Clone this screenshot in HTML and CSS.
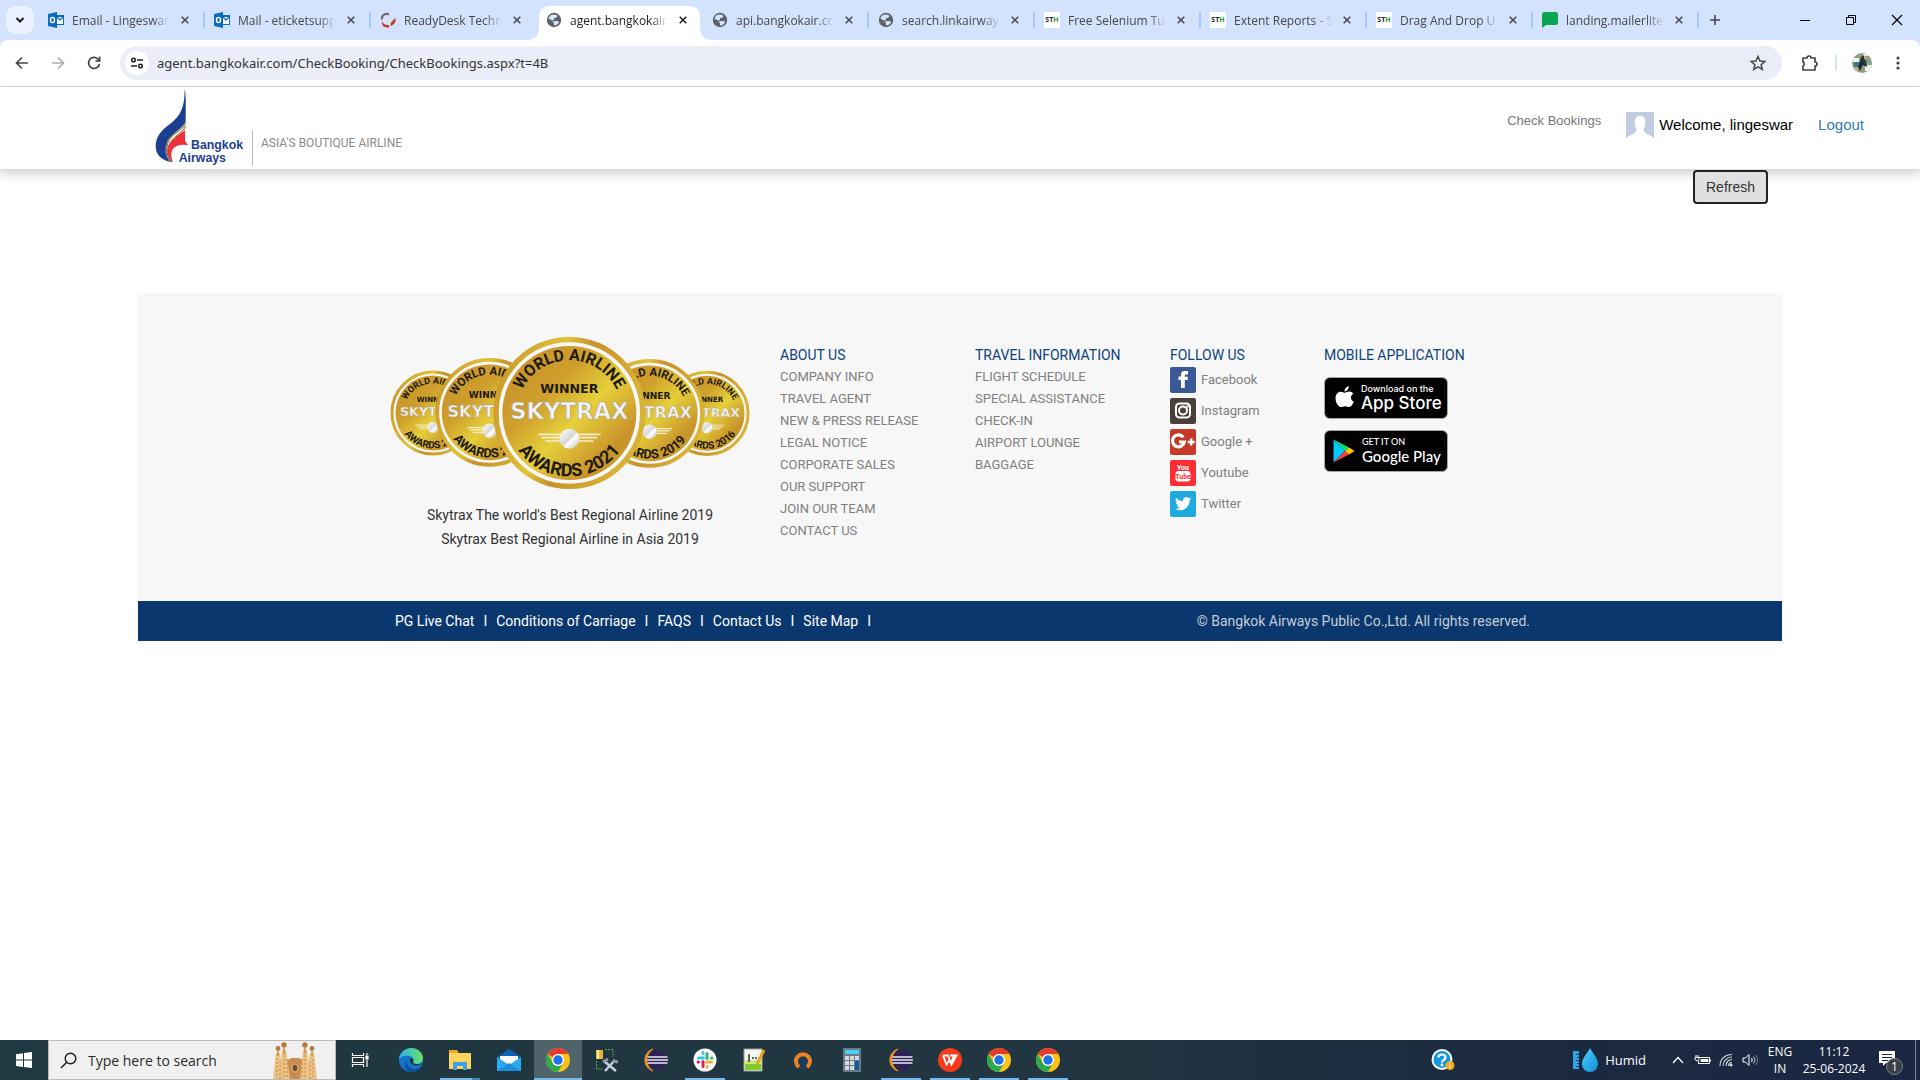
FILE: index.html
```
<!DOCTYPE html>
<html lang="en">
<head>
<meta charset="utf-8">
<title>Check Bookings - Bangkok Airways</title>
<link rel="stylesheet" href="styles.css">
</head>
<body>
<svg class="defs" width="0" height="0" aria-hidden="true">
  <defs>
    <linearGradient id="gold" x1="0" y1="0" x2="1" y2="1"><stop offset="0.1" stop-color="#c8922a"/><stop offset="0.35" stop-color="#cfa02c"/><stop offset="0.55" stop-color="#e6cf3a"/><stop offset="0.8" stop-color="#c8922a"/><stop offset="1" stop-color="#d9b032"/></linearGradient>
    <linearGradient id="rim" x1="0" y1="0" x2="1" y2="0.3"><stop offset="0" stop-color="#c8922a"/><stop offset="0.45" stop-color="#e0c337"/><stop offset="0.6" stop-color="#c8922a"/><stop offset="1" stop-color="#d8b234"/></linearGradient>
    <linearGradient id="silver" x1="0" y1="0" x2="1" y2="1"><stop offset="0" stop-color="#fff"/><stop offset="0.5" stop-color="#d8d8d8"/><stop offset="0.6" stop-color="#fff"/><stop offset="1" stop-color="#bbb"/></linearGradient>
    <linearGradient id="edge-sea" x1="0" y1="0" x2="1" y2="0"><stop offset="0" stop-color="#2ab4ea"/><stop offset="1" stop-color="#6be067"/></linearGradient>
    <linearGradient id="drop" x1="0" y1="0" x2="1" y2="1"><stop offset="0" stop-color="#4fd0f7"/><stop offset="1" stop-color="#0d8fe0"/></linearGradient>
    <path id="arc-top" d="M-158 0A158 158 0 0 1 158 0"/>
    <path id="arc-bottom" d="M-190 0A190 190 0 0 0 190 0"/>
  </defs>
  <symbol id="outlook" viewBox="0 0 16 16"><path fill="#0a6cc4" d="M0 2 9 0v16L0 14z"/><path fill="#0a6cc4" d="M9 3h7v10H9z"/><path fill="#fff" d="M9 5h6v7H9z"/><path d="m9 5 3 3 3-3" fill="none" stroke="#0a6cc4" stroke-width="1.3"/><ellipse cx="4.5" cy="8" rx="2" ry="2.6" fill="none" stroke="#fff" stroke-width="1.4"/></symbol>
  <symbol id="swirl" viewBox="0 0 16 16"><path d="M1 8C0 3 4 0 9 1v2.500C5 2 3 4 3 7z" fill="#776a64"/><path d="M2 9c1 3 3 4 7 4v2.500C4 16 1 13 2 9zM15.500 6c.5 4-1 6.500-5 8 0-1 0-3 1-4z" fill="#c43a22"/></symbol>
  <symbol id="globe" viewBox="0 0 16 16"><circle cx="8" cy="8" r="7.200" fill="#5f6368"/><path d="M8 2.500c2 0 3 .8 3.500 1.500L10 6H8v2l-2 .5-3.600-2A5.600 5.600 0 0 1 8 2.500zM9 9h2.500l1.600 1A5.500 5.500 0 0 1 8 13.500V11L6 10z" fill="#d3e3fd"/></symbol>
  <symbol id="bubble" viewBox="0 0 16 16"><path fill="#09a552" d="M2.500 0h11A2.500 2.500 0 0 1 16 2.500v8a2.500 2.500 0 0 1-2.500 2.500H4l-4 3V2.500A2.500 2.500 0 0 1 2.500 0z"/></symbol>
  <symbol id="x" viewBox="0 0 8 8"><path d="m.7.7 6.600 6.600m0-6.600L.7 7.300" stroke="currentColor" stroke-width="1.500" fill="none"/></symbol>
  <symbol id="chrome" viewBox="0 0 24 24"><circle cx="12" cy="12" r="12" fill="#fbc116"/><path fill="#e33b2e" d="M1.600 6A12 12 0 0 1 22.400 6H12a6 6 0 0 0-5.200 3z"/><path fill="#2da94f" d="M1.600 6A12 12 0 0 0 12 24l5.200-9a6 6 0 0 1-10.400 0z"/><circle cx="12" cy="12" r="6" fill="#fff"/><circle cx="12" cy="12" r="4.700" fill="#1f73e8"/></symbol>
  <symbol id="eclipse" viewBox="0 0 24 24"><path fill="#f7941e" d="M9 1a11.500 11.500 0 0 0 0 22A13 13 0 0 1 9 1z" stroke="#f7941e"/><circle cx="13.500" cy="12" r="10.300" fill="#2c2255"/><path d="M3.500 9h20M3 12h21M3.500 15h20" stroke="#e8e6f2" stroke-width="1.700"/></symbol>
  <symbol id="medal" viewBox="-228 -228 456 456" overflow="visible">
    <circle r="220" fill="#f7f7f7" stroke="url(#rim)" stroke-width="16"/><circle r="201" fill="url(#gold)"/>
    <text class="medal-arc"><textPath href="#arc-top" startOffset="50%">WORLD AIRLINE</textPath></text>
    <text class="medal-winner" y="-60">WINNER</text>
    <text class="medal-name" y="18">SKYTRAX</text>
    <path d="M-94 64H94M-84 74H84M-72 84H72" stroke="#f5ecd0" stroke-width="5"/><circle cy="77" r="30" fill="url(#silver)"/>
  </symbol>
</svg>

<header class="browser">
  <div class="tabstrip">
    <button class="tab-search" aria-label="Search tabs"><svg width="10" height="8" viewBox="0 0 10 8"><path d="m1.500 2 3.500 3.500L8.500 2" fill="none" stroke="#1f1f1f" stroke-width="2"/></svg></button>
    <div class="tab"><svg class="fav"><use href="#outlook"/></svg><span>Email - Lingeswar(Gm</span><button aria-label="Close"><svg><use href="#x"/></svg></button></div>
    <div class="tab"><svg class="fav"><use href="#outlook"/></svg><span>Mail - eticketsupport</span><button aria-label="Close"><svg><use href="#x"/></svg></button></div>
    <div class="tab before"><svg class="fav"><use href="#swirl"/></svg><span>ReadyDesk Technical</span><button aria-label="Close"><svg><use href="#x"/></svg></button></div>
    <div class="tab active"><svg class="fav"><use href="#globe"/></svg><span>agent.bangkokair.com</span><button aria-label="Close"><svg><use href="#x"/></svg></button></div>
    <div class="tab"><svg class="fav"><use href="#globe"/></svg><span>api.bangkokair.com</span><button aria-label="Close"><svg><use href="#x"/></svg></button></div>
    <div class="tab"><svg class="fav"><use href="#globe"/></svg><span>search.linkairways.com</span><button aria-label="Close"><svg><use href="#x"/></svg></button></div>
    <div class="tab"><b class="fav sth">ST<i>H</i></b><span>Free Selenium Tutorial</span><button aria-label="Close"><svg><use href="#x"/></svg></button></div>
    <div class="tab"><b class="fav sth">ST<i>H</i></b><span>Extent Reports - Sel</span><button aria-label="Close"><svg><use href="#x"/></svg></button></div>
    <div class="tab"><b class="fav sth">ST<i>H</i></b><span>Drag And Drop Using</span><button aria-label="Close"><svg><use href="#x"/></svg></button></div>
    <div class="tab"><svg class="fav"><use href="#bubble"/></svg><span>landing.mailerlite.com</span><button aria-label="Close"><svg><use href="#x"/></svg></button></div>
    <button class="new-tab" aria-label="New tab"><svg width="12" height="12"><path d="M6 1v10M1 6h10" stroke="#474747" stroke-width="1.600"/></svg></button>
    <div class="window-buttons">
      <button aria-label="Minimize"><svg width="12" height="12"><path d="M1 6.500h10" stroke="#000"/></svg></button>
      <button aria-label="Restore"><svg width="12" height="12" fill="none" stroke="#000"><path d="M1.500 3.500h7v7h-7zM3.500 3V1.500h7v7H9"/></svg></button>
      <button aria-label="Close window"><svg width="12" height="12"><path d="m1 1 10 10M11 1 1 11" stroke="#000" stroke-width="1.200"/></svg></button>
    </div>
  </div>
  <div class="toolbar">
    <button aria-label="Back"><svg width="16" height="16" fill="none" stroke="#474747" stroke-width="1.700"><path d="M14 8H3m5-5.500L2.500 8 8 13.500"/></svg></button>
    <button aria-label="Forward"><svg width="16" height="16" fill="none" stroke="#b0b0b2" stroke-width="1.700"><path d="M2 8h11M8 2.500 13.500 8 8 13.500"/></svg></button>
    <button aria-label="Reload"><svg width="16" height="16" fill="none" stroke="#474747" stroke-width="1.700"><path d="M13.500 9A5.500 5.500 0 1 1 12 4l1.500 1.500M13.700 1.500v4.300H9.500"/></svg></button>
    <div class="omnibox">
      <button class="site-info" aria-label="Site information"><svg width="14" height="12" fill="none" stroke="#1f1f1f" stroke-width="1.500"><circle cx="3.500" cy="3" r="1.800"/><path d="M7 3h6M1 9h6"/><circle cx="10.500" cy="9" r="1.800"/></svg></button>
      <input class="url" type="text" aria-label="Address" value="agent.bangkokair.com/CheckBooking/CheckBookings.aspx?t=4B">
      <button class="star" aria-label="Bookmark"><svg width="16" height="16" fill="none" stroke="#474747" stroke-width="1.500"><path d="m8 1.500 2 4.600 4.800.4-3.700 3.200 1.200 4.800L8 11.900l-4.300 2.600 1.200-4.800L1.200 6.500 6 6.100z"/></svg></button>
    </div>
    <button class="ext" aria-label="Extensions"><svg width="18" height="18" fill="none" stroke="#474747" stroke-width="1.700"><path d="M2 4h4a2 2 0 0 1 4 0h4v4a2 2 0 0 1 0 4v4H2v-4a2.200 2.200 0 0 0 0-4z"/></svg></button>
    <span class="bar"></span>
    <button class="profile" aria-label="Profile"><svg width="20" height="20" viewBox="0 0 20 20"><clipPath id="round"><circle cx="10" cy="10" r="10"/></clipPath><g clip-path="url(#round)"><path fill="#8fa184" d="M0 0h20v20H0z"/><path fill="#f1f3e8" d="M1 5h6v4H1zM13 12h6v6h-6zM11 1h5v2h-5z"/><path fill="#2b7d9b" d="M2 9h6v5H2zM12 7h3v6h-3z"/><path fill="#27302c" d="m9 4 3-2 1 6 2 6-4-2-3 6-2-4 2-6z"/><path fill="#d2a878" d="M1 14h5v6H1zM12 3h2v3h-2z"/></g></svg></button>
    <button class="menu" aria-label="Menu"><svg width="4" height="16" fill="#474747"><circle cx="2" cy="3" r="1.600"/><circle cx="2" cy="8" r="1.600"/><circle cx="2" cy="13" r="1.600"/></svg></button>
  </div>
</header>

<div class="page">
  <header class="site-header">
    <a class="logo" href="#" aria-label="Bangkok Airways">
      <svg width="88" height="80" viewBox="76 27 264 240">
        <path fill="#1c3f94" d="M165 28c4 8 4 60 3 98-8 16-35 30-48 53-11 22-10 44 8 68-30-5-51-22-50-50 1-29 18-47 43-65 33-25 44-51 44-104z"/>
        <path fill="none" stroke="#a1915b" stroke-width="4" d="M168 130c-10 24-40 27-54 55-9 22-7 41 8 60M168 139c-10 22-34 28-45 48-11 20-10 40 4 57"/>
        <path fill="#ee2f3c" d="M168 146c-4 19-38 25-50 46-9 18-6 38 12 54-8-20-7-34 5-44 12-10 25-5 30-16 4-11-2-22 3-40z"/>
        <path fill="#ee2f3c" d="M166 150c-6 18-3 30 9 46-14 0-31-6-42 2-6-30 20-34 33-48z"/>
        <g class="logo-text"><text x="184" y="207">Bangkok</text><text x="147" y="247">Airways</text></g>
      </svg>
      <span class="tagline">ASIA'S BOUTIQUE AIRLINE</span>
    </a>
    <nav class="account">
      <a class="check" href="#">Check Bookings</a>
      <span class="user"><svg width="28" height="28" viewBox="0 0 28 28"><path fill="#c3cde2" d="M0 0h28v28H0z"/><path fill="#fff" d="M14 4c-4 0-6 3-5 8-.5 2 .5 3 1 4v3c-1 3-6 4-10 7v2h28v-2c-4-3-9-4-10-7v-3c.5-1 1.500-2 1-4 1-6-1-8-5-8z"/></svg>Welcome, lingeswar</span>
      <a class="logout" href="#">Logout</a>
    </nav>
  </header>
  <main class="actions"><button class="refresh">Refresh</button></main>
  <footer class="site-footer">
    <div class="footer-main">
      <div class="container columns">
        <section class="awards">
          <svg width="360" height="152" viewBox="32 51 1080 456" role="img" aria-label="Skytrax World Airline Awards">
            <g transform="translate(161 279) scale(.56)"><use href="#medal" x="-228" y="-228" width="456" height="456"/><text class="medal-arc low"><textPath href="#arc-bottom" startOffset="50%">AWARDS 2017</textPath></text></g>
            <g transform="translate(331 277) scale(.715)"><use href="#medal" x="-228" y="-228" width="456" height="456"/><text class="medal-arc low"><textPath href="#arc-bottom" startOffset="50%">AWARDS 2018</textPath></text></g>
            <g transform="translate(983 280) scale(.56)"><use href="#medal" x="-228" y="-228" width="456" height="456"/><text class="medal-arc low"><textPath href="#arc-bottom" startOffset="50%">AWARDS 2016</textPath></text></g>
            <g transform="translate(811 280) scale(.715)"><use href="#medal" x="-228" y="-228" width="456" height="456"/><text class="medal-arc low"><textPath href="#arc-bottom" startOffset="50%">AWARDS 2019</textPath></text></g>
            <g transform="translate(570 279)"><use href="#medal" x="-228" y="-228" width="456" height="456"/><text class="medal-arc low"><textPath href="#arc-bottom" startOffset="50%">AWARDS 2021</textPath></text></g>
          </svg>
          <p>Skytrax The world's Best Regional Airline 2019<br>Skytrax Best Regional Airline in Asia 2019</p>
        </section>
        <section><h2>ABOUT US</h2>
          <ul><li><a href="#">COMPANY INFO</a></li><li><a href="#">TRAVEL AGENT</a></li><li><a href="#">NEW &amp; PRESS RELEASE</a></li><li><a href="#">LEGAL NOTICE</a></li><li><a href="#">CORPORATE SALES</a></li><li><a href="#">OUR SUPPORT</a></li><li><a href="#">JOIN OUR TEAM</a></li><li><a href="#">CONTACT US</a></li></ul>
        </section>
        <section><h2>TRAVEL INFORMATION</h2>
          <ul><li><a href="#">FLIGHT SCHEDULE</a></li><li><a href="#">SPECIAL ASSISTANCE</a></li><li><a href="#">CHECK-IN</a></li><li><a href="#">AIRPORT LOUNGE</a></li><li><a href="#">BAGGAGE</a></li></ul>
        </section>
        <section><h2>FOLLOW US</h2>
          <ul class="social">
            <li><a href="#"><svg viewBox="0 0 26 26"><rect width="26" height="26" rx="2" fill="#3b5998"/><path fill="#fff" d="M11 21v-8H8.500v-3.500H11V7.500C11 4.800 12.500 4 14.500 4H18v3.500h-2c-1 0-1.200.4-1.200 1.200v1H18l-.5 3.300h-2.700v8z"/></svg>Facebook</a></li>
            <li><a href="#"><svg viewBox="0 0 26 26"><rect width="26" height="26" rx="2" fill="#4a4039"/><g fill="none" stroke="#fff" stroke-width="2"><rect x="6" y="5.500" width="14" height="14" rx="3.500"/><circle cx="13" cy="12.500" r="4"/></g><circle cx="17.500" cy="8.500" r="1.200" fill="#fff"/></svg>Instagram</a></li>
            <li><a href="#"><svg viewBox="0 0 26 26"><rect width="26" height="26" rx="2" fill="#c53929"/><path fill="none" stroke="#fff" stroke-width="3.200" d="M13.300 8.200A6 6 0 1 0 14.400 13H9"/><path stroke="#fff" stroke-width="2.400" d="M21.200 9.500v7M17.700 13h7"/></svg>Google +</a></li>
            <li><a href="#"><svg viewBox="0 0 26 26"><rect width="26" height="26" rx="2" fill="#fb2e34"/><rect x="5.500" y="11" width="15" height="10.500" rx="3" fill="#fff"/><g class="yt"><text x="13" y="10" fill="#fff">You</text><text x="13" y="19" fill="#fb2e34">Tube</text></g></svg>Youtube</a></li>
            <li><a href="#"><svg viewBox="0 0 26 26"><rect width="26" height="26" rx="2" fill="#1fa9e1"/><path fill="#fff" transform="translate(5 4.500) scale(.68)" d="M24 4.600a10 10 0 0 1-2.800.8A5 5 0 0 0 23.300 2.700a10 10 0 0 1-3.100 1.200 4.900 4.900 0 0 0-8.400 4.500A14 14 0 0 1 1.700 3.200a4.900 4.900 0 0 0 1.500 6.600 5 5 0 0 1-2.200-.6 4.900 4.900 0 0 0 3.900 4.900 5 5 0 0 1-2.200.1 4.900 4.900 0 0 0 4.600 3.400A10 10 0 0 1 0 19.500 14 14 0 0 0 21.500 7.100 10 10 0 0 0 24 4.600z"/></svg>Twitter</a></li>
          </ul>
        </section>
        <section><h2>MOBILE APPLICATION</h2>
          <a class="store apple" href="#"><svg width="19" height="24" viewBox="0 0 19 24" fill="#fff"><path d="M9.700 6.700C11 6.700 12.300 5.500 14.300 5.600c1.700.1 3 .8 3.900 2.100-3.400 2.100-2.800 6.500.6 7.900-.8 2.400-2.600 5.500-4.700 5.500-1.600 0-2-.9-4-.9s-2.500.9-4 .9C3.400 21.100.5 16.400.5 12.200c0-4.100 2.600-6.500 5.100-6.500 1.700 0 3 1 4.100 1z"/><path d="M9.500 5.400C9.400 2.900 11.400.7 13.700.3c.3 2.600-1.800 5-4.200 5.100z"/></svg><span><small>Download on the</small>App Store</span></a>
          <a class="store play" href="#"><svg width="22" height="24" viewBox="0 0 22 24"><path fill="#00c8ff" d="M.5.500 12 12 .5 23.500z"/><path fill="#00e676" d="M.5.500 16 8.500 12 12z"/><path fill="#ff3a44" d="M.5 23.500 16 15.500 12 12z"/><path fill="#ffc900" d="m16 8.500 5.500 3.500L16 15.500 12 12z"/></svg><span><small>GET IT ON</small>Google Play</span></a>
        </section>
      </div>
    </div>
    <div class="footer-bar">
      <div class="container bar-row">
        <nav><a href="#">PG Live Chat</a><i>I</i><a href="#">Conditions of Carriage</a><i>I</i><a href="#">FAQS</a><i>I</i><a href="#">Contact Us</a><i>I</i><a href="#">Site Map</a><i>I</i></nav>
        <p>© Bangkok Airways Public Co.,Ltd. All rights reserved.</p>
      </div>
    </div>
  </footer>
</div>

<div class="taskbar">
  <button class="start" aria-label="Start"><svg width="16" height="16" fill="#fff"><path d="M0 2.200 7 1.200V7.600H0zM8 1 16 0v7.600H8zM0 8.500h7v6.400l-7-1zM8 8.500h8V16l-8-1z"/></svg></button>
  <label class="search">
    <svg width="17" height="17" fill="none" stroke="#1a1a1a" stroke-width="1.400"><circle cx="10.500" cy="6.500" r="5.300"/><path d="M6.500 10.500 1 16"/></svg>
    <input type="text" aria-label="Search" placeholder="Type here to search">
    <svg width="46" height="38" viewBox="0 0 46 38"><path fill="#c98d50" d="M14 38V20l5-3h8l5 3v18z"/><path fill="#edc285" d="M1 38 4 12h4l4 26zM8 38l2-29h4l4 29zM28 38l3-29h4l3 29zM34 38l4-26h4l3 26z"/><g fill="#b77a3a"><circle cx="6" cy="7.500" r="2.400"/><circle cx="12" cy="4" r="2.700"/><circle cx="33" cy="4" r="2.700"/><circle cx="40" cy="7.500" r="2.400"/></g><path d="M6 9v6m6-10v8m21-8v8m7-4v6" stroke="#c58c4c" stroke-width="1.500"/><path d="M5 17v21M8 20v18m4-24v24m3-20v20m15-20v20m3-24v24m5-18v18m3-20v20" stroke="#c08446" stroke-dasharray="2 2"/><ellipse cx="23" cy="27" rx="3" ry="4" fill="#6b4b36" stroke="#e8b878"/></svg>
  </label>
  <nav class="apps">
    <button class="task-view" aria-label="Task view"><svg width="18" height="16" fill="none" stroke="#fff" stroke-width="1.200"><path d="M1.500 1v2.500h11V1M1.500 15v-2.500h11V15M1.500 5.500h11v5h-11zM16 1v2m0 5v7"/><path d="M15 4h2v3h-2z" fill="#fff"/></svg></button>
    <button aria-label="Edge"><svg width="24" height="24" viewBox="0 0 24 24"><circle cx="12" cy="12" r="12" fill="#1473c8"/><path fill="url(#edge-sea)" d="M0 12C0 5 6 0 12 0c7 0 12 5 12 10 0 4-3 6-6 6s-4-1-4-2c1-1 1-5-3-6C6 7 1 8 0 12z"/><path fill="#0f4f9e" d="M8 12c-1 5 3 9 8 9 3 0 5-1 6-2-2 3-6 5-10 5C7 23 4 17 8 12z"/><path fill="#203740" d="M11 11c-1 3 2 6.500 6 6.500 3 0 5-1 7-3-3 2-9 2-10 0 1-2 0-5-3-3.500z"/></svg></button>
    <button class="open split" aria-label="File Explorer"><svg width="24" height="22" viewBox="0 0 24 22"><path fill="#e9a820" d="M1 1h8l2 3H1z"/><path fill="#ffd45e" d="M1 4h22v16H1z"/><path fill="#3fa0e4" d="M5 13h14v8h-4v-4H9v4H5z"/></svg></button>
    <button aria-label="Mail"><svg width="24" height="24" viewBox="0 0 24 24"><path fill="#0b63b8" d="M0 9 12 1l12 8v3H0z"/><path fill="#fff" d="M3 8h18v9H3z"/><path fill="#29a9ee" d="m0 9 12 8 12-8v14H0z"/><path fill="#178fdd" d="m0 23 12-8 12 8z"/></svg></button>
    <button class="current" aria-label="Chrome"><svg width="24" height="24"><use href="#chrome"/></svg></button>
    <button aria-label="Database tools"><svg width="24" height="24" viewBox="0 0 24 24"><path fill="#e5b540" d="M1 2h7v9H1z"/><path fill="#ffe79d" d="M2 2h2v9H2z"/><path fill="none" stroke="#55a845" stroke-dasharray="2 1" d="M10 1.500h8v8M1.500 13v8H8"/><path stroke="#c6d3e0" stroke-width="2.500" d="m9 13 12 10M20 12 10 23"/><path stroke="#8c9bac" stroke-width="3" d="m8 14 5-3m5 2 5 1"/></svg></button>
    <button aria-label="Eclipse"><svg width="24" height="24"><use href="#eclipse"/></svg></button>
    <button class="open" aria-label="Slack"><svg width="24" height="24" viewBox="0 0 24 24"><circle cx="12" cy="12" r="11.500" fill="#fff"/><g stroke-width="3" stroke-linecap="round"><path d="M5.500 10h5M10 4.500v1" stroke="#36c5f0"/><path d="M14 5.500v5M18.500 10h.5" stroke="#2eb67d"/><path d="M13.500 14h5M14 18.500v.5" stroke="#ecb22e"/><path d="M10 13.500v5M5 14h.5" stroke="#e01e5a"/></g></svg></button>
    <button aria-label="Notepad++"><svg width="24" height="24" viewBox="0 0 24 24"><path fill="#f4f7f0" stroke="#9aa393" d="M2 1h18v22H2z"/><path fill="#83cc2c" d="M3 14h16v8H3z"/><path fill="#cbe87f" d="M3 12h16v4H3z"/><path stroke="#333" stroke-width="1.500" d="M7 6v8m3-4h2m1 0h2"/><path stroke="#e9a21d" stroke-width="3" d="m22 2-7 14"/></svg></button>
    <button aria-label="OpenVPN"><svg width="20" height="20" viewBox="0 0 20 20"><path fill="#193a63" d="M8 11h4l2 8H6z"/><circle cx="10" cy="11" r="4" fill="#193a63"/><path fill="none" stroke="#ee8222" stroke-width="4" d="M6 17a7 7 0 1 1 8 0"/></svg></button>
    <button aria-label="Calculator"><svg width="18" height="24" viewBox="0 0 18 24"><rect width="18" height="24" rx="1" fill="#6c7a86"/><path fill="#46d1f5" d="M2 2h14v4H2z"/><path fill="#d3dbe1" d="M2 8h4v4H2zM7 8h4v4H7zM12 8h4v4h-4zM2 13h4v4H2zM7 13h4v4H7zM2 18h4v4H2zM7 18h4v4H7z"/><path fill="#11589d" d="M12 13h4v9h-4z"/></svg></button>
    <button class="open" aria-label="Eclipse workspace"><svg width="24" height="24"><use href="#eclipse"/></svg></button>
    <button class="open" aria-label="WPS Office"><svg width="24" height="24" viewBox="0 0 24 24"><circle cx="12" cy="12" r="12" fill="#fb3a1c"/><path d="M5 7.500h5l3 8 3-8h-4m-7 0 3.500 9L12 11m1 4.500.500 1L18.500 7.500H16" fill="none" stroke="#fff" stroke-width="1.800"/></svg></button>
    <button class="open" aria-label="Chrome profile 2"><svg width="24" height="24"><use href="#chrome"/></svg></button>
    <button class="open" aria-label="Chrome profile 3"><svg width="24" height="24"><use href="#chrome"/></svg></button>
  </nav>
  <div class="tray">
    <button class="help" aria-label="Help"><svg width="24" height="22" viewBox="0 0 24 22"><circle cx="11" cy="10.500" r="9.500" fill="#1597dc" stroke="#fff" stroke-width="2"/><path d="M7.500 8.500c0-4 7-4 7 0 0 2.500-3.500 2.500-3.500 5" fill="none" stroke="#fff" stroke-width="2.200"/><circle cx="11" cy="16" r="1.400" fill="#fff"/><circle cx="19" cy="16.500" r="4.500" fill="#f6a91c"/><path stroke="#fff" stroke-width="1.200" d="M19 15.500v3.500m0-5.500v1"/></svg></button>
    <button class="weather"><svg width="26" height="26" viewBox="0 0 26 26"><path fill="#2ba5e8" d="M0 4h6v18H0z"/><path stroke="#144468" d="M3 7.500h3m-2 3h2m-3 3h3m-2 3h2m-3 3h3"/><path fill="url(#drop)" d="M17 1c3 6 8 10 8 16a8 8 0 0 1-16 0c0-6 5-10 8-16z"/></svg>Humid</button>
    <button class="status" aria-label="Hidden icons"><svg width="12" height="8" fill="none" stroke="#fff" stroke-width="1.300"><path d="m1 7 5-5.500L11 7"/></svg></button>
    <button class="status" aria-label="Battery"><svg width="17" height="12" fill="none" stroke="#fff"><path d="M5 3.500h10.500v6H4.500V7M16.500 5.500v2M1 3.500h4v2L3 7 1 5.500zM2 1v2m2-2v2"/><path fill="#fff" d="M7 5.500h7v2H7z"/></svg></button>
    <button class="status" aria-label="Wi-Fi"><svg width="14" height="14" fill="none" stroke="#d5d9e0" stroke-width="1.100"><path d="M1 13C1 6 6 1.500 13 1.500M4 13c0-5 4-9 9-9M7 13c0-4 2.500-6.500 6-6.500M9.500 13c0-2 1.500-3.500 3.500-3.500"/><circle cx="12" cy="12" r="1" fill="#fff"/></svg></button>
    <button class="status" aria-label="Volume"><svg width="17" height="14" fill="none" stroke="#fff"><path d="M1 5h2.500L7 1.500v11L3.500 9H1z"/><path d="M9.500 5q1.500 2 0 4"/><path stroke="#bcc3cf" d="M11.500 3.500q3 3.500 0 7"/><path stroke="#77819a" d="M13.500 2q4 5 0 10"/></svg></button>
    <button class="lang">ENG<br>IN</button>
    <button class="clock">11:12<br>25-06-2024</button>
    <button class="notes" aria-label="Notifications"><svg width="24" height="24" viewBox="0 0 24 24"><path fill="#fff" d="M0 0h16v12h-9l-3 3v-3H0z"/><path stroke="#1c2840" d="M3 3.500h10M3 6.500h10M3 9.500h6"/><circle cx="15.500" cy="15.500" r="8" fill="#3a3f48" stroke="#7b808a"/><text class="count" x="15.500" y="20">1</text></svg></button>
  </div>
</div>
</body>
</html>
```
FILE: styles.css
```
* { box-sizing: border-box; }
body { margin: 0; min-height: 100vh; display: flex; flex-direction: column; background: #fff; font-family: "Liberation Sans", Arial, sans-serif; }
button { margin: 0; padding: 0; border: 0; background: none; font: inherit; color: inherit; display: flex; align-items: center; justify-content: center; }
a { text-decoration: none; color: inherit; }
ul, p, h2 { margin: 0; padding: 0; font-weight: 400; list-style: none; }
.defs { position: absolute; }

/* Browser frame */
.browser, .taskbar { font-family: "Open Sans", "Noto Sans", sans-serif; }
.browser { background: #d3e3fd; }
.tabstrip { height: 40px; display: flex; align-items: center; }
.tab-search { width: 28px; height: 28px; margin: 0 4px 0 6px; border-radius: 10px; background: #ebf2fe; }
.tab { position: relative; width: 166px; height: 34px; padding: 0 12px 0 10px; display: flex; align-items: center; gap: 8px; font-size: 12px; color: #474747; }
.tab::after { content: ""; position: absolute; right: -1px; top: 9px; width: 2px; height: 16px; background: #a8c7fa; }
.tab.before::after { display: none; }
.tab.active { color: #1f1f1f; align-self: flex-end; padding-bottom: 6px; }
.tab.active::before { content: ""; position: absolute; inset: 0 2px 0 3px; background: #fff; border-radius: 10px 10px 0 0; }
.tab.active::after { inset: auto -8px 0 -7px; width: auto; height: 10px; background: radial-gradient(circle at 0 0, transparent 9px, #fff 10px) 0 0 / 10px 10px no-repeat, radial-gradient(circle at 100% 0, transparent 9px, #fff 10px) 100% 0 / 10px 10px no-repeat; }
.tab > * { position: relative; }
.tab span { flex: 1; min-width: 0; overflow: hidden; white-space: nowrap; -webkit-mask-image: linear-gradient(90deg, #000 82%, transparent); mask-image: linear-gradient(90deg, #000 82%, transparent); }
.tab button { width: 14px; height: 16px; }
.tab button svg { width: 8px; height: 8px; }
.fav { flex: none; width: 16px; height: 16px; }
.sth { background: #fff; color: #222; font-size: 7px; line-height: 16px; text-align: center; }
.sth i { color: #2f9a2f; font-style: normal; }
.new-tab { width: 28px; height: 28px; margin-left: 3px; }
.window-buttons { margin-left: auto; display: flex; }
.window-buttons button { width: 46px; height: 40px; }
.toolbar { height: 47px; display: flex; align-items: center; background: #fff; border-bottom: 1px solid #dcdcdc; border-radius: 8px 8px 0 0; padding: 0 4px; }
.toolbar > button { width: 36px; height: 36px; }
.omnibox { flex: 1; height: 34px; margin: 0 10px 0 8px; border-radius: 17px; background: #ebeef8; display: flex; align-items: center; padding: 0 16px 0 5px; }
.site-info { width: 24px; height: 24px; border-radius: 12px; background: #fff; }
.url { flex: 1; min-width: 0; border: 0; background: none; padding: 0 8px; font: 13px "Noto Sans", "Open Sans", sans-serif; color: #333; outline: 0; }
.bar { width: 2px; height: 16px; margin: 0 7px; background: #d3e3fd; }

/* Site header */
.page { flex: 1; }
.site-header { height: 83px; padding: 0 56px 0 155px; display: flex; justify-content: space-between; align-items: flex-start; border-bottom: 1px solid #ddd; box-shadow: 0 4px 10px rgba(0, 0, 0, .18); }
.logo { display: flex; align-items: flex-end; gap: 9px; padding-top: 2px; }
.logo-text { font: bold 37px "Liberation Sans", Arial, sans-serif; fill: #1c3f94; }
.tagline { height: 36px; margin-bottom: 3px; padding-left: 8px; border-left: 1px solid #bbb; font: 12px/26px Roboto, "Liberation Sans", sans-serif; color: #8b8b8b; }
.account { display: flex; align-items: flex-start; padding-top: 25px; font-size: 15px; line-height: 26px; color: #000; }
.check { font-size: 13px; line-height: 18px; color: #777; margin-right: 25px; }
.user { display: flex; align-items: flex-start; gap: 5px; margin-right: 25px; }
.logout { color: #337ab7; }
.actions { display: flex; justify-content: flex-end; padding-right: 152px; height: 123px; align-items: flex-start; }
.refresh { position: relative; height: 34px; width: 75px; border: 2px solid #222; border-radius: 4px; background: #e0e0e0; color: #333; font-size: 14px; }

/* Site footer */
.site-footer { margin: 0 138px; font-family: Roboto, "Liberation Sans", sans-serif; }
.footer-main { background: #f7f7f7; padding: 44px 0; height: 308px; }
.container { max-width: 1170px; margin: 0 auto; padding: 0 15px; }
.columns { display: grid; grid-template-columns: 390px 195px 195px 154px 1fr; }
.awards svg { display: block; }
.awards p { width: 360px; margin-top: 14px; text-align: center; font-size: 14px; line-height: 24px; color: #333; }
.columns h2 { margin-top: 7px; font-size: 14px; line-height: 22px; color: #0d4480; white-space: nowrap; }
.columns li { font-size: 13px; line-height: 22px; color: #808080; white-space: nowrap; }
.social { display: grid; gap: 5px; margin-top: 1px; }
.social a { display: flex; align-items: center; gap: 5px; height: 26px; }
.social svg { width: 26px; height: 26px; }
.yt { font: bold 7px Roboto, sans-serif; text-anchor: middle; }
.store { width: 124px; height: 42px; margin: 11px 0; padding-left: 10px; border: 1px solid #a6a6a6; border-radius: 6px; background: #000; color: #fff; display: flex; align-items: center; gap: 7px; font: 500 17px/18px Inter, sans-serif; white-space: nowrap; }
.store.play { margin-top: 0; padding-left: 8px; font: 500 15px/18px Lato, sans-serif; }
.store small { display: block; font-size: 9px; line-height: 10px; }
.footer-bar { background: #0a386e; color: #fff; }
.bar-row { height: 40px; display: flex; justify-content: space-between; align-items: center; padding: 0 15px 0 20px; font-size: 14px; }
.bar-row i { font-style: normal; margin: 0 9px; }
.bar-row p { color: #c4ccd6; }
.medal-arc { font: bold 48px Roboto, "Liberation Sans", sans-serif; fill: #1d1a10; text-anchor: middle; }
.medal-arc.low { font-size: 54px; }
.medal-winner { font: bold 38px "DejaVu Sans", sans-serif; fill: #1d1a10; text-anchor: middle; }
.medal-name { font: bold 68px "DejaVu Sans", sans-serif; fill: #f4f4f4; stroke: #a9a08a; stroke-width: 2px; text-anchor: middle; }

/* Taskbar */
.taskbar { height: 40px; display: flex; background: linear-gradient(90deg, #203841, #213640 55%, #1b2a40 78%, #1b2742); color: #fff; }
.start { width: 48px; }
.search { width: 288px; height: 40px; border: 1px solid #b9b9b9; background: #f0f0f0; display: flex; align-items: center; gap: 11px; padding: 0 17px 0 11px; }
.search input { flex: 1; min-width: 0; border: 0; padding: 0; background: none; font: 14px "Open Sans", sans-serif; outline: 0; }
.search input::placeholder { color: #2b2b2b; opacity: 1; }
.apps { display: flex; gap: 1px; }
.apps button { width: 48px; height: 40px; }
.apps .task-view { margin-right: 2px; }
.apps .current { background: #4f636b; box-shadow: inset 0 -2px #76b9ed; }
.apps .open { background: linear-gradient(#76b9ed, #76b9ed) 50% 100% / 40px 2px no-repeat; }
.apps .split { background: linear-gradient(90deg, #76b9ed 32px, #4c86b4 32px) 50% 100% / 40px 2px no-repeat; }
.tray { margin-left: auto; display: flex; align-items: center; font-size: 12px; line-height: 17px; }
.help { margin-right: 118px; }
.weather { gap: 6px; font-size: 13px; margin-right: 20px; }
.status { width: 24px; height: 40px; }
.lang { width: 36px; }
.clock { width: 72px; }
.notes { width: 46px; height: 40px; border-right: 1px solid #7d8698; margin-right: 4px; padding: 5px 3px 0 0; }
.count { font: 12px "Open Sans", sans-serif; fill: #fff; text-anchor: middle; }
```
